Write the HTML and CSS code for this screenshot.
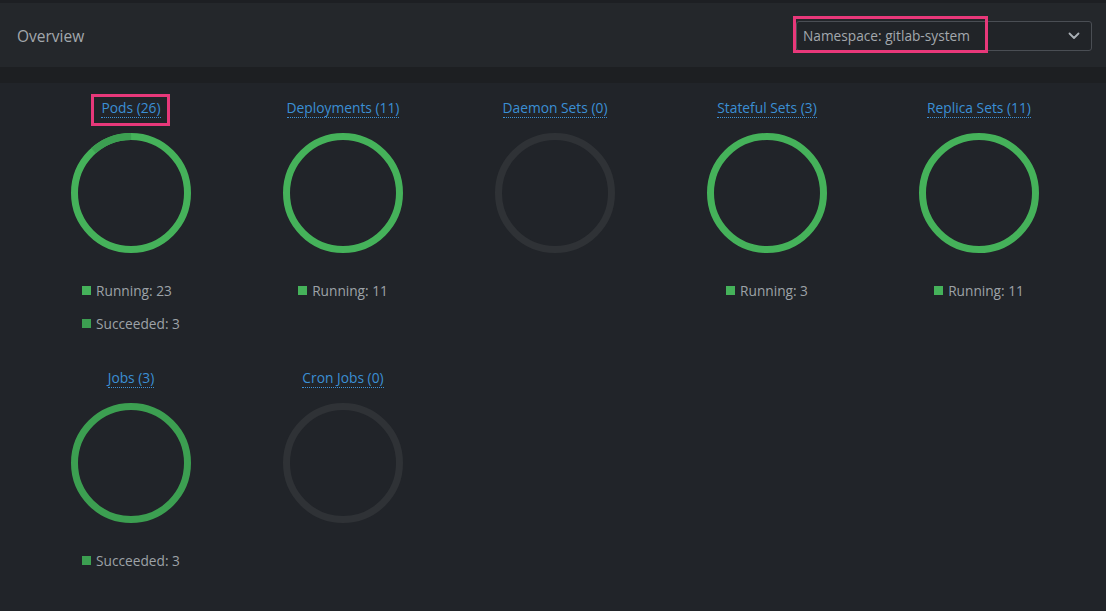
FILE: index.html
```html
<!DOCTYPE html>
<html>
<head>
<meta charset="utf-8">
<link rel="stylesheet" href="styles.css">
</head>
<body>
<div class="topline"></div>
<header class="header">
  <div class="title">Overview</div>
  <div class="select">
    <span class="select-label highlight">Namespace: gitlab-system</span>
    <svg class="chevron" width="12" height="8" viewBox="0 0 12 8"><path d="M1.5 1.5 L6 6 L10.5 1.5" fill="none" stroke="#aab0b6" stroke-width="1.8" stroke-linecap="round" stroke-linejoin="round"/></svg>
  </div>
</header>
<div class="divider"></div>
<main class="grid">
  <div class="item">
    <div class="item-title"><a class="link highlight-pods">Pods (26)</a></div>
    <svg class="ring" width="120" height="120" viewBox="0 0 120 120">
      <circle cx="60" cy="60" r="56.5" class="arc-run"/>
      <circle cx="60" cy="60" r="56.5" class="arc-succ" stroke-dasharray="41 400" transform="rotate(-131.5 60 60)"/>
    </svg>
    <div class="legend">
      <div class="legend-row"><span class="sq run"></span>Running: 23</div>
      <div class="legend-row"><span class="sq succ"></span>Succeeded: 3</div>
    </div>
  </div>
  <div class="item">
    <div class="item-title"><a class="link">Deployments (11)</a></div>
    <svg class="ring" width="120" height="120" viewBox="0 0 120 120">
      <circle cx="60" cy="60" r="56.5" class="arc-run"/>
    </svg>
    <div class="legend">
      <div class="legend-row"><span class="sq run"></span>Running: 11</div>
    </div>
  </div>
  <div class="item">
    <div class="item-title"><a class="link">Daemon Sets (0)</a></div>
    <svg class="ring" width="120" height="120" viewBox="0 0 120 120">
      <circle cx="60" cy="60" r="56.5" class="arc-empty"/>
    </svg>
  </div>
  <div class="item">
    <div class="item-title"><a class="link">Stateful Sets (3)</a></div>
    <svg class="ring" width="120" height="120" viewBox="0 0 120 120">
      <circle cx="60" cy="60" r="56.5" class="arc-run"/>
    </svg>
    <div class="legend">
      <div class="legend-row"><span class="sq run"></span>Running: 3</div>
    </div>
  </div>
  <div class="item">
    <div class="item-title"><a class="link">Replica Sets (11)</a></div>
    <svg class="ring" width="120" height="120" viewBox="0 0 120 120">
      <circle cx="60" cy="60" r="56.5" class="arc-run"/>
    </svg>
    <div class="legend">
      <div class="legend-row"><span class="sq run"></span>Running: 11</div>
    </div>
  </div>
  <div class="item">
    <div class="item-title"><a class="link">Jobs (3)</a></div>
    <svg class="ring" width="120" height="120" viewBox="0 0 120 120">
      <circle cx="60" cy="60" r="56.5" class="arc-succ"/>
    </svg>
    <div class="legend">
      <div class="legend-row"><span class="sq succ"></span>Succeeded: 3</div>
    </div>
  </div>
  <div class="item">
    <div class="item-title"><a class="link">Cron Jobs (0)</a></div>
    <svg class="ring" width="120" height="120" viewBox="0 0 120 120">
      <circle cx="60" cy="60" r="56.5" class="arc-empty"/>
    </svg>
  </div>
</main>
</body>
</html>
```
FILE: styles.css
```css
* { box-sizing: border-box; }
html, body {
  margin: 0;
  padding: 0;
  background: #212429;
  font-family: "Open Sans", "Noto Sans", sans-serif;
  color: #9da2a7;
}
body { width: 1106px; height: 611px; overflow: hidden; }
.topline { height: 3px; background: #1d1f23; }
.header {
  height: 64px;
  background: #24272b;
  display: flex;
  align-items: center;
  justify-content: space-between;
  padding: 0 14px 0 17px;
}
.title { font-size: 15.5px; color: #a3a8ad; margin-top: 1px; }
.select {
  width: 296px;
  height: 30px;
  border: 1px solid #4a4e54;
  border-radius: 3px;
  background: #212428;
  display: flex;
  align-items: center;
  justify-content: space-between;
  padding: 0 11px 0 6px;
  margin-top: 1px;
}
.select-label {
  position: relative;
  font-size: 13.7px;
  color: #a3a8ad;
  white-space: nowrap;
}
.highlight::after {
  content: "";
  position: absolute;
  left: -10px;
  right: -18px;
  top: -10px;
  bottom: -8px;
  border: 3px solid #e8387a;
}
.chevron { display: block; }
.divider { height: 16px; background: #1d1f22; }
.grid {
  display: grid;
  grid-template-columns: repeat(5, 212px);
  row-gap: 29px;
  padding: 16px 0 0 25px;
}
.item {
  display: flex;
  flex-direction: column;
  align-items: center;
}
.item-title { height: 20px; display: flex; align-items: flex-start; }
.link {
  position: relative;
  font-size: 13.8px;
  line-height: 18px;
  color: #3b8fd4;
  border-bottom: 1px dotted #3b8fd4;
  cursor: pointer;
}
.highlight-pods::after {
  content: "";
  position: absolute;
  left: -10px;
  right: -9px;
  top: -5px;
  bottom: -9px;
  border: 3px solid #e8387a;
}
.ring { display: block; margin-top: 14px; }
.ring circle { fill: none; stroke-width: 7; }
.arc-run { stroke: #45b25a; }
.arc-succ { stroke: #3c9f51; }
.arc-empty { stroke: #2f3236; }
.legend { margin-top: 21px; }
.legend-row {
  display: flex;
  align-items: center;
  font-size: 13.7px;
  line-height: 33px;
  color: #9da2a7;
  white-space: nowrap;
}
.sq { width: 9px; height: 9px; margin-right: 5px; }
.sq.run { background: #45b25a; }
.sq.succ { background: #3c9f51; }
```
